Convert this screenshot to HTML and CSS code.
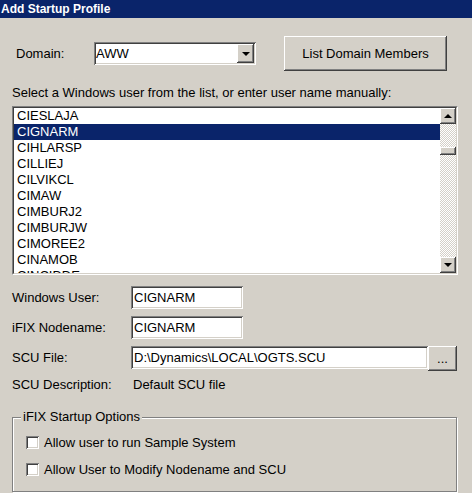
FILE: index.html
```html
<!DOCTYPE html>
<html lang="en">
<head>
  <meta charset="UTF-8" />
  <title>Add Startup Profile</title>
  <link rel="stylesheet" href="styles.css">
</head>
<body>

  <!-- Caption -->
  <div class="titlebar">Add Startup Profile</div>

  <!-- Domain row -->
  <div class="domain-row">
    <span class="domain-label">Domain:</span>
    <div class="combo">
      <span class="combo-text">AWW</span>
      <span class="raised combo-btn"><span class="arrow-down"></span></span>
    </div>
    <div class="raised button wide">List Domain Members</div>
  </div>

  <div class="prompt">Select a Windows user from the list, or enter user name manually:</div>

  <!-- User list -->
  <div class="listbox">
    <div class="listbox-inner">
      <ul class="items">
        <li>CIESLAJA</li>
        <li class="selected">CIGNARM</li>
        <li>CIHLARSP</li>
        <li>CILLIEJ</li>
        <li>CILVIKCL</li>
        <li>CIMAW</li>
        <li>CIMBURJ2</li>
        <li>CIMBURJW</li>
        <li>CIMOREE2</li>
        <li>CINAMOB</li>
        <li>CINCIDDE</li>
      </ul>
      <div class="scrollbar">
        <span class="raised scroll-btn"><span class="arrow-up"></span></span>
        <span class="raised thumb"></span>
        <span class="track-fill"></span>
        <span class="raised scroll-btn"><span class="arrow-down"></span></span>
      </div>
    </div>
  </div>

  <!-- Fields -->
  <div class="fields">
    <div class="field-row">
      <span class="field-label">Windows User:</span>
      <div class="textbox short">CIGNARM</div>
    </div>
    <div class="field-row">
      <span class="field-label">iFIX Nodename:</span>
      <div class="textbox short">CIGNARM</div>
    </div>
    <div class="field-row">
      <span class="field-label">SCU File:</span>
      <div class="textbox long">D:\Dynamics\LOCAL\OGTS.SCU</div>
      <div class="raised button browse">...</div>
    </div>
    <div class="field-row desc">
      <span class="field-label">SCU Description:</span>
      <span class="desc-value">Default SCU file</span>
    </div>
  </div>

  <!-- Options -->
  <fieldset class="group">
    <legend>iFIX Startup Options</legend>
    <div class="check-row">
      <span class="checkbox"></span>
      <span>Allow user to run Sample System</span>
    </div>
    <div class="check-row">
      <span class="checkbox"></span>
      <span>Allow User to Modify Nodename and SCU</span>
    </div>
  </fieldset>

</body>
</html>
```

FILE: styles.css
```css
body {
  margin: 0;
  width: 472px;
  height: 493px;
  overflow: hidden;
  background-color: #d4d0c8;
  color: black;
  font-family: "Liberation Sans", Arial, sans-serif;
  font-size: 13px;
}

.titlebar {
  height: 18px;
  line-height: 18px;
  padding-left: 1px;
  background-color: #0a246a;
  color: white;
  font-weight: bold;
  font-size: 12px;
}

/* shared 3d looks */
.raised {
  background-color: #d4d0c8;
  box-shadow: inset -1px -1px #404040, inset 1px 1px #fff,
              inset -2px -2px #808080, inset 2px 2px #d4d0c8;
  box-sizing: border-box;
}

.sunken {
  box-shadow: inset 1px 1px #808080, inset -1px -1px #fff,
              inset 2px 2px #404040, inset -2px -2px #d4d0c8;
}

.arrow-down, .arrow-up {
  width: 0;
  height: 0;
  border-left: 4px solid transparent;
  border-right: 4px solid transparent;
}

.arrow-down {
  border-top: 4px solid black;
}

.arrow-up {
  border-bottom: 4px solid black;
}

/* domain row */
.domain-row {
  display: flex;
  align-items: center;
  margin-top: 18px;
  padding-left: 16px;
  height: 35px;
}

.domain-label {
  width: 78px;
}

.combo {
  display: flex;
  align-items: center;
  justify-content: space-between;
  width: 162px;
  height: 23px;
  box-sizing: border-box;
  padding: 2px 2px 2px 2px;
  background: white;
  box-shadow: inset 1px 1px #808080, inset -1px -1px #fff,
              inset 2px 2px #404040, inset -2px -2px #d4d0c8;
}

.combo-text {
  padding-left: 0;
}

.combo-btn {
  display: flex;
  align-items: center;
  justify-content: center;
  width: 17px;
  height: 19px;
}

.button {
  display: flex;
  align-items: center;
  justify-content: center;
}

.wide {
  width: 163px;
  height: 35px;
  margin-left: 28px;
}

.prompt {
  margin-top: 14px;
  padding-left: 12px;
  line-height: 16px;
}

/* listbox */
.listbox {
  margin: 5px 0 0 12px;
  width: 446px;
  height: 169px;
  box-sizing: border-box;
  border: 1px solid;
  border-color: #808080 #fff #fff #808080;
}

.listbox-inner {
  display: flex;
  height: 100%;
  box-sizing: border-box;
  border: 1px solid;
  border-color: #404040 #d4d0c8 #d4d0c8 #404040;
  background: white;
}

.items {
  flex: 1;
  margin: 0;
  padding: 0;
  list-style: none;
  overflow: hidden;
}

.items li {
  height: 16px;
  line-height: 16px;
  padding-left: 3px;
  white-space: nowrap;
}

.items li.selected {
  background-color: #0a246a;
  color: white;
}

.scrollbar {
  display: flex;
  flex-direction: column;
  width: 16px;
  background: repeating-conic-gradient(#d4d0c8 0% 25%, #fff 0% 50%) 0 0 / 2px 2px;
}

.scroll-btn {
  display: flex;
  align-items: center;
  justify-content: center;
  height: 16px;
  flex-shrink: 0;
}

.thumb {
  height: 8px;
  margin-top: 23px;
  flex-shrink: 0;
}

.track-fill {
  flex: 1;
}

/* text fields */
.fields {
  display: flex;
  flex-direction: column;
  gap: 7px;
  margin-top: 11px;
  padding-left: 12px;
}

.field-row {
  display: flex;
  align-items: flex-start;
}

.field-label {
  width: 119px;
  line-height: 23px;
}

.textbox {
  height: 23px;
  line-height: 23px;
  box-sizing: border-box;
  padding-left: 3px;
  background: white;
  box-shadow: inset 1px 1px #808080, inset -1px -1px #fff,
              inset 2px 2px #404040, inset -2px -2px #d4d0c8;
  white-space: nowrap;
}

.short {
  width: 112px;
}

.long {
  width: 297px;
}

.browse {
  width: 29px;
  height: 25px;
  align-items: flex-end;
  padding-bottom: 5px;
}

.field-row.desc {
  margin-top: -1px;
}

.desc .field-label {
  width: 121px;
  line-height: 16px;
}

.desc-value {
  line-height: 16px;
}

/* group box */
.group {
  margin: 16px 0 0 12px;
  width: 445px;
  box-sizing: border-box;
  padding: 0 0 14px 13px;
  border: 1px solid #808080;
  box-shadow: inset 1px 1px #fff, 1px 1px #fff;
  min-inline-size: 0;
}

.group legend {
  margin-left: -5px;
  padding: 0 2px;
  line-height: 16px;
  background-color: #d4d0c8;
}

.check-row {
  display: flex;
  align-items: center;
  height: 16px;
  margin-top: 9px;
}

.check-row + .check-row {
  margin-top: 11px;
}

.checkbox {
  width: 13px;
  height: 13px;
  box-sizing: border-box;
  margin-right: 5px;
  background: white;
  box-shadow: inset 1px 1px #808080, inset -1px -1px #fff,
              inset 2px 2px #404040, inset -2px -2px #d4d0c8;
}
```
